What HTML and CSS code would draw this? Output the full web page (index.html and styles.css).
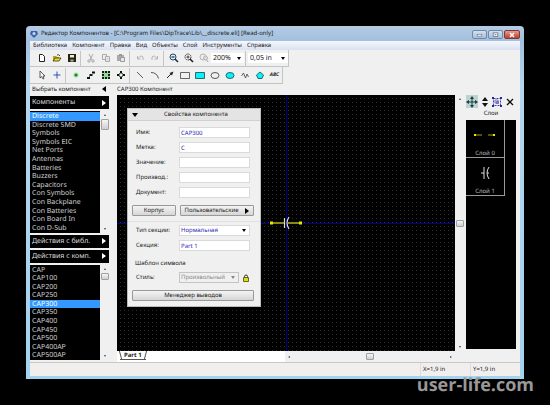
FILE: index.html
```
<!DOCTYPE html>
<html lang="ru">
<head>
    <meta charset="UTF-8">
    <meta name="viewport" content="width=device-width, initial-scale=1.0">
    <title>Редактор Компонентов</title>
    <link rel="stylesheet" href="styles.css">
</head>
<body>
    <div class="window">
        <header class="titlebar">
            <svg class="app-icon" viewBox="0 0 8 8"><path d="M1 1h6l1 3-4 4-4-4z" fill="#3f62ad"/><circle cx="4" cy="3.500" r="1.500" fill="#c8d8f4"/></svg>
            <span class="title">Редактор Компонентов - [C:\Program Files\DipTrace\Lib\__discrete.eli] [Read-only]</span>
            <div class="window-buttons">
                <button class="win-btn" aria-label="Свернуть"><svg viewBox="0 0 14 8"><rect x="4.500" y="3.500" width="5" height="2" fill="#fff" stroke="#59697f" stroke-width=".6"/></svg></button>
                <button class="win-btn" aria-label="Развернуть"><svg viewBox="0 0 14 8"><rect x="4.500" y="2" width="5" height="4" fill="#fff" stroke="#59697f" stroke-width=".8"/><path d="M6 4h2" stroke="#59697f"/></svg></button>
                <button class="win-btn close" aria-label="Закрыть"><svg viewBox="0 0 14 8"><path d="M5 2l4 4M9 2L5 6" stroke="#fff" stroke-width="1.500"/></svg></button>
            </div>
        </header>

        <nav class="menu">
            <button>Библиотека</button>
            <button>Компонент</button>
            <button>Правка</button>
            <button>Вид</button>
            <button>Объекты</button>
            <button>Слой</button>
            <button>Инструменты</button>
            <button>Справка</button>
        </nav>

        <div class="toolbars">
            <div class="toolbar">
                <button class="tool" aria-label="Новый"><svg viewBox="0 0 10 10"><path d="M2.500 1.500h3l2 2v5h-5z" fill="#fff" stroke="#222"/></svg></button>
                <button class="tool" aria-label="Открыть"><svg viewBox="0 0 10 10"><path d="M1 3h3l1 1h2v4H1z" fill="#b3a51c"/><path d="M1 8l2-3h6L7 8z" fill="#e7dc3a" stroke="#3b3800" stroke-width=".8"/><path d="M5 2q2-1 3 1" fill="none" stroke="#222" stroke-width=".8"/></svg></button>
                <button class="tool" aria-label="Сохранить"><svg viewBox="0 0 10 10"><path d="M1 1h8v8H1z" fill="#26260c"/><path d="M3 2h4v2.500H3z" fill="#e8e8e8"/><path d="M3.500 6.500h3v2h-3z" fill="#b5b5a0"/></svg></button>
                <span class="sep"></span>
                <button class="tool" aria-label="Вырезать" disabled><svg viewBox="0 0 10 10"><path d="M3 1l3 6M7 1L4 7" fill="none" stroke="#aaa"/><circle cx="3" cy="8" r="1.200" fill="none" stroke="#aaa"/><circle cx="7" cy="8" r="1.200" fill="none" stroke="#aaa"/></svg></button>
                <button class="tool" aria-label="Копировать" disabled><svg viewBox="0 0 10 10"><path d="M1.500 1.500h4v5h-4z" fill="#eee" stroke="#aaa"/><path d="M4.500 3.500h4v5h-4z" fill="#eee" stroke="#aaa"/><path d="M5.500 5.500h2M5.500 7h2" stroke="#bbb" stroke-width=".6"/></svg></button>
                <button class="tool" aria-label="Вставить" disabled><svg viewBox="0 0 10 10"><path d="M1 2h7v6H1z" fill="#aaa"/><path d="M3 1h3v2H3z" fill="#999"/><path d="M4.500 4.500h4v4h-4z" fill="#e8e8e8" stroke="#999"/></svg></button>
                <span class="sep"></span>
                <button class="tool" aria-label="Отменить" disabled><svg viewBox="0 0 10 10"><path d="M2.500 3v3h3M3 5.500q3-4 5-1.500v3" fill="none" stroke="#b3b3b3"/></svg></button>
                <button class="tool" aria-label="Повторить" disabled><svg viewBox="0 0 10 10"><path d="M7.500 3v3h-3M7 5.500q-3-4-5-1.500v3" fill="none" stroke="#b3b3b3"/></svg></button>
                <span class="sep"></span>
                <button class="tool" aria-label="Уменьшить"><svg viewBox="0 0 10 10"><circle cx="4" cy="4" r="3" fill="#d9eef5" stroke="#27465c"/><path d="M2.500 4h3" stroke="#002"/><path d="M6 6l3 3" stroke="#16324c" stroke-width="1.600"/></svg></button>
                <button class="tool" aria-label="Увеличить"><svg viewBox="0 0 10 10"><circle cx="4" cy="4" r="3" fill="#eee" stroke="#444" stroke-dasharray="2 .600"/><path d="M2.500 4h3M4 2.500v3" stroke="#222" stroke-width=".8"/><path d="M6 6l3 3" stroke="#222" stroke-width="1.600"/></svg></button>
                <button class="tool" aria-label="Предыдущий масштаб" disabled><svg viewBox="0 0 10 10"><circle cx="4" cy="4" r="3" fill="#eee" stroke="#b3b3b3"/><circle cx="6.500" cy="5" r="2" fill="#ddd" stroke="#b3b3b3"/><path d="M7.500 6.500L9 9" stroke="#aaa"/></svg></button>
                <span class="select-box zoom-box"><select aria-label="Масштаб"><option>200%</option></select></span>
                <span class="sep"></span>
                <span class="select-box grid-box"><select aria-label="Шаг сетки"><option>0,05 in</option></select></span>
            </div>
            <div class="toolbar">
                <button class="tool" aria-label="Выбор"><svg viewBox="0 0 10 10"><path d="M3 1v7l1.500-1.500L6 9l1-.500L6 6h2z" fill="#fff" stroke="#333" stroke-width=".8"/></svg></button>
                <button class="tool" aria-label="Начало координат"><svg viewBox="0 0 10 10"><path d="M5 1.500v7M1.500 5h7" stroke="#2f50c4"/></svg></button>
                <span class="sep"></span>
                <button class="tool" aria-label="Вывод"><svg viewBox="0 0 10 10"><circle cx="5" cy="5" r="2.800" fill="#b8e6bd"/><circle cx="5" cy="5" r="1.600" fill="#128529"/></svg></button>
                <button class="tool" aria-label="Ряд выводов"><svg viewBox="0 0 10 10"><path d="M1 7h3v2H1zM3.500 4h3v2h-3zM6 1.500h3v2H6z" fill="#111"/><path d="M3 7l1-1M6 4.500l1-1" stroke="#17942d"/></svg></button>
                <button class="tool" aria-label="Массив выводов"><svg viewBox="0 0 10 10"><path d="M1 1h8v8H1z" fill="#9ad39e"/><path d="M1 1h2v2H1zM4 1h2v2H4zM7 1h2v2H7zM1 4h2v2H1zM7 4h2v2H7zM1 7h2v2H1zM4 7h2v2H4zM7 7h2v2H7z" fill="#0c2310"/></svg></button>
                <button class="tool" aria-label="Выводы по кругу"><svg viewBox="0 0 10 10"><path d="M4 1h2v2.500H4zM4 6.500h2V9H4zM1 4h2.500v2H1zM6.500 4H9v2H6.500z" fill="#111"/><path d="M3 3l1 1M7 3L6 4M3 7l1-1M7 7L6 6" stroke="#17942d"/></svg></button>
                <span class="sep"></span>
                <button class="tool" aria-label="Линия"><svg viewBox="0 0 10 10"><path d="M2 2l6 6" stroke="#333" stroke-width=".8"/></svg></button>
                <button class="tool" aria-label="Дуга"><svg viewBox="0 0 10 10"><path d="M1 2.500q6 0 7.500 6" fill="none" stroke="#333" stroke-width=".8"/></svg></button>
                <button class="tool" aria-label="Стрелка"><svg viewBox="0 0 10 10"><path d="M2 8l4-4" stroke="#222"/><path d="M8.500 1.500l-4 1.500 2.500 2.500z" fill="#222"/></svg></button>
                <button class="tool" aria-label="Прямоугольник"><svg viewBox="0 0 10 10"><path d="M.500 2.500h9v6h-9z" fill="none" stroke="#555" stroke-width=".9"/></svg></button>
                <button class="tool" aria-label="Закрашенный прямоугольник"><svg viewBox="0 0 10 10"><path d="M.500 2.500h9v6h-9z" fill="#0ef1f4" stroke="#155d68" stroke-width=".9"/></svg></button>
                <button class="tool" aria-label="Эллипс"><svg viewBox="0 0 10 10"><ellipse cx="5" cy="5.500" rx="4" ry="3" fill="none" stroke="#333" stroke-width=".8"/></svg></button>
                <button class="tool" aria-label="Закрашенный эллипс"><svg viewBox="0 0 10 10"><ellipse cx="5" cy="5.500" rx="4" ry="3" fill="#0ef1f4" stroke="#155d68" stroke-width=".9"/></svg></button>
                <button class="tool" aria-label="Ломаная"><svg viewBox="0 0 10 10"><path d="M1.500 6L3.500 3l2 5 1.500-4 1.500 3" fill="none" stroke="#444" stroke-width=".8"/></svg></button>
                <button class="tool" aria-label="Многоугольник"><svg viewBox="0 0 10 10"><path d="M5 2l3.500 3L7 8.500H3L1.500 5z" fill="#0ef1f4" stroke="#155d68" stroke-width=".9"/></svg></button>
                <button class="tool text-tool" aria-label="Текст">ABC</button>
            </div>
        </div>

        <main class="workspace">
            <aside class="sidebar">
                <button class="pane-title">Выбрать компонент <svg class="arrow" viewBox="0 0 4 6"><path d="M4 0v6L0 3z" fill="#000"/></svg></button>
                <button class="section">Компоненты <svg class="arrow" viewBox="0 0 4 6"><path d="M0 0v6l4-3z" fill="#fff"/></svg></button>
                <div class="list-box libraries">
                    <ul>
                        <li><button class="selected">Discrete</button></li>
                        <li><button>Discrete SMD</button></li>
                        <li><button>Symbols</button></li>
                        <li><button>Symbols EIC</button></li>
                        <li><button>Net Ports</button></li>
                        <li><button>Antennas</button></li>
                        <li><button>Batteries</button></li>
                        <li><button>Buzzers</button></li>
                        <li><button>Capacitors</button></li>
                        <li><button>Con Symbols</button></li>
                        <li><button>Con Backplane</button></li>
                        <li><button>Con Batteries</button></li>
                        <li><button>Con Board In</button></li>
                        <li><button>Con D-Sub</button></li>
                    </ul>
                    <div class="vscroll"><i class="up"></i><b class="thumb tall"></b><i class="down"></i></div>
                </div>
                <button class="section">Действия с библ. <svg class="arrow" viewBox="0 0 4 6"><path d="M0 0v6l4-3z" fill="#fff"/></svg></button>
                <button class="section">Действия с комп. <svg class="arrow" viewBox="0 0 4 6"><path d="M0 0v6l4-3z" fill="#fff"/></svg></button>
                <div class="list-box parts">
                    <ul>
                        <li><button>CAP</button></li>
                        <li><button>CAP100</button></li>
                        <li><button>CAP200</button></li>
                        <li><button>CAP250</button></li>
                        <li><button class="selected">CAP300</button></li>
                        <li><button>CAP350</button></li>
                        <li><button>CAP400</button></li>
                        <li><button>CAP450</button></li>
                        <li><button>CAP500</button></li>
                        <li><button>CAP400AP</button></li>
                        <li><button>CAP500AP</button></li>
                    </ul>
                    <div class="vscroll"><i class="up"></i><b class="thumb"></b><i class="down"></i></div>
                </div>
            </aside>

            <section class="editor">
                <h1 class="editor-title">CAP300 Компонент</h1>
                <div class="canvas-row">
                    <div class="canvas">
                        <svg class="symbol" viewBox="0 0 34 14">
                            <path d="M2 7h13M19 7h13" stroke="#b5b500" stroke-width="1.400"/>
                            <path d="M1 5.500h3v3H1zM30 5.500h3v3h-3z" fill="#e6e600"/>
                            <path d="M15.500 2v10" stroke="#ddd" stroke-width="1.200"/>
                            <path d="M20 1q-4 6 0 12" fill="none" stroke="#ddd" stroke-width="1.200"/>
                        </svg>

                        <form class="props">
                            <h2><svg class="fold" viewBox="0 0 6 4"><path d="M0 0h6L3 4z" fill="#000"/></svg>Свойства компонента</h2>
                            <div class="fields main-fields">
                                <label for="name">Имя:</label><input id="name" value="CAP300">
                                <label for="ref">Метка:</label><input id="ref" value="C">
                                <label for="value">Значение:</label><input id="value">
                                <label for="vendor">Производ.:</label><input id="vendor">
                                <label for="doc">Документ:</label><input id="doc">
                            </div>
                            <div class="buttons">
                                <button type="button">Корпус</button>
                                <button type="button" class="wide">Пользовательские <svg class="arrow" viewBox="0 0 4 6"><path d="M0 0v6l4-3z" fill="#000"/></svg></button>
                            </div>
                            <div class="fields part-fields">
                                <label for="type">Тип секции:</label>
                                <span class="select-box"><select id="type"><option>Нормальная</option></select></span>
                                <label for="part">Секция:</label><input id="part" value="Part 1">
                            </div>
                            <h3>Шаблон символа</h3>
                            <div class="fields style-fields">
                                <label for="style">Стиль:</label>
                                <span class="select-box off"><select id="style" disabled><option>Произвольный</option></select></span>
                                <svg class="lock" viewBox="0 0 8 8"><path d="M2.500 4V2.500q0-1.500 1.500-1.500t1.500 1.500V4" fill="none" stroke="#333"/><path d="M1.500 3.500h5v4h-5z" fill="#dede14" stroke="#4a4a00" stroke-width=".8"/></svg>
                            </div>
                            <div class="buttons">
                                <button type="button" class="wide">Менеджер выводов</button>
                            </div>
                        </form>
                    </div>
                    <div class="vscroll"><i class="up"></i><b class="thumb"></b><i class="down"></i></div>
                </div>
                <div class="tabs">
                    <div class="tab-area"><button class="tab">Part 1</button></div>
                    <div class="hscroll"><i class="left"></i><b class="thumb"></b><i class="right"></i></div>
                </div>
            </section>

            <aside class="layers">
                <div class="layer-tools">
                    <button class="active" aria-label="Переместить"><svg viewBox="0 0 12 12"><path d="M6 1v10M1 6h10" stroke="#163f3d"/><path d="M6 0l2 3H4zM6 12l2-3H4zM0 6l3-2v4zM12 6L9 4v4z" fill="#163f3d"/></svg></button>
                    <button aria-label="Порядок"><svg viewBox="0 0 12 12"><path d="M6 1l3 4H3zM6 11l3-4H3z" fill="#111"/></svg></button>
                    <button aria-label="Сгруппировать"><svg viewBox="0 0 12 12"><path d="M2.500 2.500h7v7h-7z" fill="none" stroke="#4040a8" stroke-dasharray="2 1"/><path d="M1 1h2v2H1zM9 1h2v2H9zM1 9h2v2H1zM9 9h2v2H9z" fill="#28288c"/><path d="M4 4h3v3H4zM5.500 5.500h2v2h-2z" fill="none" stroke="#5858b8" stroke-width=".8"/></svg></button>
                    <button aria-label="Удалить"><svg viewBox="0 0 12 12"><path d="M3 3l6 6M9 3L3 9" stroke="#111" stroke-width="1.300"/></svg></button>
                </div>
                <h2>Слои</h2>
                <div class="layer-list">
                    <button class="layer">
                        <svg viewBox="0 0 24 14"><path d="M2 7h7M15 7h7" stroke="#a3a300"/><path d="M1 6h2v2H1zM20 6h2v2h-2z" fill="#e6e600"/></svg>
                        Слой 0
                    </button>
                    <button class="layer">
                        <svg viewBox="0 0 24 14"><path d="M11 1v12M8 7h3M14 7h2" stroke="#ddd"/><path d="M16 1q-4 6 0 12" fill="none" stroke="#ddd"/></svg>
                        Слой 1
                    </button>
                </div>
            </aside>
        </main>

        <footer class="status">
            <span>X=1,9 in</span>
            <span>Y=1,9 in</span>
        </footer>
    </div>
    <p class="watermark">user-life.com</p>
</body>
</html>
```
FILE: styles.css
```
* {
    box-sizing: border-box;
}
body {
    margin: 0;
    height: 100vh;
    padding: 26px 26px 0;
    display: flex;
    flex-direction: column;
    background: #000;
    color: #1a1a1a;
    font-family: "Noto Sans", "Open Sans", sans-serif;
    font-size: 7px;
    line-height: 9px;
    text-rendering: geometricPrecision;
}
h1, h2, h3, p, ul {
    margin: 0;
    padding: 0;
    font-size: 7px;
    font-weight: normal;
    list-style: none;
}
button, input, select {
    margin: 0;
    padding: 0;
    border: none;
    background: none;
    color: inherit;
    font: inherit;
    text-rendering: inherit;
}
svg {
    display: block;
    flex: none;
}
.window {
    flex: 1;
    min-height: 0;
    display: flex;
    flex-direction: column;
    padding: 0 4px 3px;
    border-radius: 4px 4px 0 0;
    background: linear-gradient(#b5cbe4, #a3c0de 14px, #b4d6ee 60px, #a2d3ef);
}

/* title bar */
.titlebar {
    display: flex;
    align-items: center;
    height: 15px;
    gap: 3px;
}
.app-icon {
    width: 8px;
    height: 8px;
}
.title {
    flex: 1;
    font-size: 6px;
    white-space: nowrap;
}
.window-buttons {
    display: flex;
    align-self: flex-start;
    padding-top: 4px;
    gap: 1px;
}
.win-btn {
    width: 15px;
    height: 9px;
    border: 1px solid #7088a6;
    border-radius: 2px;
    background: linear-gradient(#d3e0ef, #a7bfdc);
}
.win-btn.close {
    width: 16px;
    background: linear-gradient(#e19d8f, #c43d2a);
    border-color: #7d3a3a;
}

/* menu */
.menu {
    display: flex;
    gap: 5px;
    height: 9px;
    padding-left: 3px;
    background: linear-gradient(#f5f8fc, #d9e1f1);
}
.menu button {
    font-size: 6px;
}

/* toolbars */
.toolbars {
    display: flex;
    flex-direction: column;
    align-items: flex-start;
    background: #f0f0f0;
}
.toolbar {
    display: flex;
    align-items: center;
    height: 17px;
    padding-left: 4px;
    border: solid #c4c4c4;
    border-width: 0 1px 1px 0;
}
.tool {
    width: 15px;
    height: 14px;
    display: grid;
    place-items: center;
}
.tool svg {
    width: 10px;
    height: 10px;
}
.text-tool {
    font-size: 5px;
    font-weight: bold;
    font-style: italic;
}
.sep {
    width: 1px;
    height: 15px;
    margin: 0 2px 0 1px;
    background: #c6c6c6;
}
.select-box {
    display: flex;
    align-items: center;
    height: 10px;
    padding: 0 3px 0 2px;
    background: #fff;
}
.select-box::after {
    content: "";
    border: 2px solid transparent;
    border-top: 3px solid #000;
    border-bottom: none;
}
.select-box select {
    flex: 1;
    min-width: 0;
    appearance: none;
}
.zoom-box {
    width: 33px;
}
.grid-box {
    width: 40px;
}

/* workspace */
.workspace {
    flex: 1;
    min-height: 0;
    display: flex;
    background: #f0f0f0;
}
.sidebar {
    width: 79px;
    display: flex;
    flex-direction: column;
    gap: 2px;
    padding-bottom: 2px;
}
.arrow {
    width: 4px;
    height: 6px;
}
.pane-title, .section {
    display: flex;
    align-items: center;
    justify-content: space-between;
    padding: 0 3px 0 2px;
    white-space: nowrap;
}
.pane-title {
    height: 10px;
    font-size: 6px;
}
.section {
    height: 13px;
    background: #000;
    color: #ddd;
}
.list-box {
    display: flex;
    min-height: 0;
    overflow: hidden;
    background: #000;
}
.list-box ul {
    flex: 1;
    display: grid;
    grid-auto-rows: minmax(0, 1fr);
    padding-top: 1px;
}
.list-box li {
    min-height: 0;
    display: flex;
}
.list-box li button {
    flex: 1;
    padding-left: 2px;
    color: #d0d0d0;
    text-align: left;
    white-space: nowrap;
}
.list-box li .selected {
    background: #3399ff;
    color: #fff;
}
.libraries {
    flex: 14 1 0;
}
.parts {
    flex: 11 1 0;
}

/* scrollbars */
.vscroll, .hscroll {
    display: flex;
    align-items: center;
    justify-content: space-between;
    background: #f0f0f0;
}
.vscroll {
    flex-direction: column;
    width: 9px;
    padding: 3px 0;
}
.vscroll i, .hscroll i {
    border: 1px solid transparent;
}
.vscroll .up {
    border-bottom: 2px solid #444;
    border-top: none;
}
.vscroll .down {
    border-top: 2px solid #444;
    border-bottom: none;
}
.hscroll .left {
    border-right: 2px solid #444;
    border-left: none;
}
.hscroll .right {
    border-left: 2px solid #444;
    border-right: none;
}
.thumb {
    width: 8px;
    height: 7px;
    border: 1px solid #a0a0a0;
    border-radius: 1px;
    background: linear-gradient(#f6f6f6, #cfcfcf);
}
.list-box .thumb {
    margin: 3px 0 auto;
}
.thumb.tall {
    height: 11px;
}

/* editor */
.editor {
    flex: 1;
    min-width: 0;
    display: flex;
    flex-direction: column;
    padding-left: 8px;
}
.editor-title {
    height: 11px;
    font-size: 6px;
    line-height: 10px;
}
.canvas-row {
    flex: 1;
    min-height: 0;
    display: flex;
}
.canvas {
    position: relative;
    flex: 1;
    display: grid;
    grid-template: 100% / 100%;
    place-items: center;
    background:
        linear-gradient(90deg, #000 3px, transparent 3px) 0 0 / 4px 4px,
        linear-gradient(#000 3px, #2c2c2c 3px) 0 0 / 4px 4px;
}
/* axes */
.canvas::before, .canvas::after {
    content: "";
    grid-area: 1 / 1;
}
.canvas::before {
    height: 100%;
    border-left: 1px solid #00008c;
}
.canvas::after {
    width: 100%;
    border-top: 1px solid #00008c;
}
.symbol {
    grid-area: 1 / 1;
    z-index: 1;
    width: 34px;
    height: 14px;
}
.tabs {
    display: flex;
    height: 11px;
}
.tab-area {
    flex: 1;
    padding-left: 3px;
    background: #fff;
}
.tab {
    display: flex;
    height: 9px;
    border-bottom: 1px solid #555;
    font-size: 6px;
    font-weight: bold;
    line-height: 8px;
}
.tab::before, .tab::after {
    content: "";
    width: 3px;
    height: 8px;
    border-left: 1px solid #555;
    transform: skewX(15deg);
}
.tab::after {
    border-left: none;
    border-right: 1px solid #555;
    transform: skewX(-15deg);
}
.hscroll {
    flex: 1;
    margin-right: 9px;
    padding: 0 3px;
}

/* floating properties panel */
.props {
    position: absolute;
    z-index: 2;
    left: 10px;
    top: 13px;
    width: 134px;
    padding-bottom: 5px;
    border: 1px solid #bbb;
    background: #f0f0f0;
    font-size: 6px;
}
.props h2 {
    display: flex;
    align-items: center;
    height: 12px;
    padding-left: 4px;
    gap: 26px;
    border-bottom: 1px solid #d0d0d0;
    background: #e4e4e4;
    font-size: 6px;
}
.fold {
    width: 6px;
    height: 4px;
}
.props h3 {
    padding: 0 7px;
    font-size: 6px;
}
.fields {
    display: grid;
    grid-template-columns: 43px 1fr;
    align-items: center;
    gap: 4px 0;
    padding: 0 10px 0 8px;
}
.fields input, .fields .select-box {
    width: 100%;
    min-width: 0;
    height: 11px;
    padding-left: 1px;
    border: 1px solid #dadada;
    background: #fff;
    color: #2a2ab0;
}
.main-fields {
    padding-top: 6px;
}
.part-fields {
    margin: 5px 0 8px;
    padding-top: 3px;
    border-top: 1px solid #e0e0e0;
}
.style-fields {
    grid-template-columns: 43px 1fr 8px;
    margin-top: 4px;
}
.fields .off {
    width: 60px;
    background: #f0f0f0;
    border-color: #c4c4c4;
    color: #888;
}
.off select {
    opacity: 1;
}
.off::after {
    border-top-color: #888;
}
.lock {
    width: 8px;
    height: 8px;
}
.buttons {
    display: flex;
    gap: 4px;
    padding: 7px 6px 0 4px;
}
.buttons button {
    display: flex;
    align-items: center;
    justify-content: center;
    gap: 7px;
    width: 44px;
    height: 11px;
    border: 1px solid #999;
    border-radius: 1px;
    background: linear-gradient(#f4f4f4, #d6d6d6);
}
.buttons .wide {
    flex: 1;
}

/* layers */
.layers {
    width: 56px;
    display: flex;
    flex-direction: column;
    padding: 11px 4px 13px 2px;
}
.layer-tools {
    display: flex;
    justify-content: space-between;
    height: 13px;
}
.layer-tools button {
    width: 12px;
}
.layer-tools svg {
    width: 12px;
    height: 12px;
}
.layer-tools .active {
    background: #bcd3d1;
}
.layers h2 {
    height: 12px;
    font-size: 6px;
    line-height: 11px;
    text-align: center;
}
.layer-list {
    flex: 1;
    background: #000;
}
.layer {
    display: flex;
    flex-direction: column;
    align-items: center;
    justify-content: space-between;
    width: 39px;
    height: 38px;
    padding-top: 8px;
    border: solid #999;
    border-width: 0 1px 1px 0;
    color: #bbb;
    font-size: 6px;
    line-height: 8px;
}
.layer svg {
    width: 24px;
    height: 14px;
}

/* status bar */
.status {
    display: flex;
    justify-content: flex-end;
    height: 14px;
    border-top: 1px solid #c8c8c8;
    background: #f1eeee;
    font-size: 6px;
    line-height: 13px;
}
.status span {
    width: 50px;
    padding-left: 2px;
    border-left: 1px solid #ddd;
}

.watermark {
    height: 26px;
    margin-right: -10px;
    color: #989898;
    font-family: "Open Sans", sans-serif;
    font-size: 18px;
    font-weight: bold;
    line-height: 12px;
    text-align: right;
}
```
